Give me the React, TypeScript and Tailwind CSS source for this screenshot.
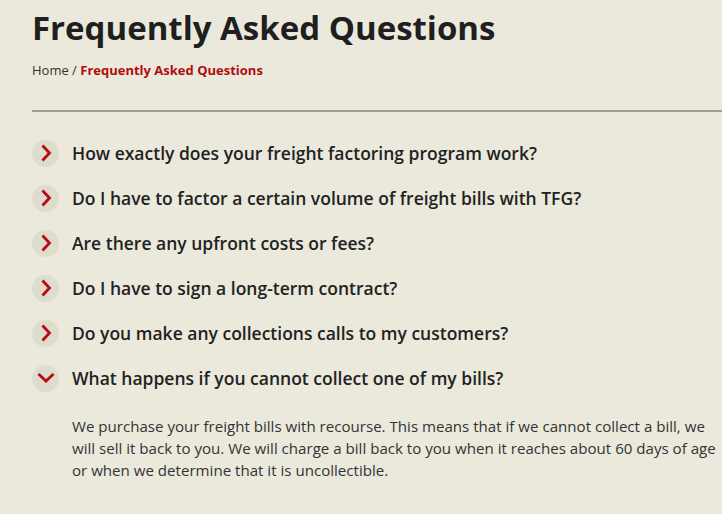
import React from 'react';

const questions = [
  'How exactly does your freight factoring program work?',
  'Do I have to factor a certain volume of freight bills with TFG?',
  'Are there any upfront costs or fees?',
  'Do I have to sign a long-term contract?',
  'Do you make any collections calls to my customers?',
  'What happens if you cannot collect one of my bills?',
];

const Chevron = ({ open }: { open: boolean }) => (
  <div className="w-[27px] h-[27px] rounded-full bg-[#dedbcf] flex items-center justify-center shrink-0">
    <svg width="20" height="20" viewBox="0 0 20 20" fill="none">
      {open ? (
        <path d="M2.5 6 L10 13 L17.5 6" stroke="#b50d12" strokeWidth="2.8" />
      ) : (
        <path d="M6.5 2.5 L13.5 10 L6.5 17.5" stroke="#b50d12" strokeWidth="2.8" />
      )}
    </svg>
  </div>
);

export default function App() {
  return (
    <div className="w-[722px] h-[514px] overflow-hidden bg-[#eae9dc] font-['Open_Sans',sans-serif] text-[#222]">
      <div className="pl-8">
        <h1 className="text-[33px] font-bold leading-none pt-[11px] text-[#1f1f1f]">Frequently Asked Questions</h1>
        <div className="mt-[17px] text-[13px] text-[#333]">
          Home / <span className="font-bold text-[#b00d0d]">Frequently Asked Questions</span>
        </div>
        <div className="mt-[29px] h-[2px] bg-[#9c9d8c]" />
        <div className="mt-[19px] flex flex-col">
          {questions.map((q, i) => {
            const open = i === questions.length - 1;
            return (
              <div key={q}>
                <div className="flex items-center gap-[13px] h-[45px]">
                  <Chevron open={open} />
                  <span className="text-[17.5px] font-semibold text-[#222]">{q}</span>
                </div>
                {open && (
                  <p className="mt-[14px] ml-[40px] text-[15.1px] leading-[22px] text-[#333]">
                    We purchase your freight bills with recourse. This means that if we cannot collect a bill, we will sell it back to you. We will charge a bill back to you when it reaches about 60 days of age or when we determine that it is uncollectible.
                  </p>
                )}
              </div>
            );
          })}
        </div>
      </div>
    </div>
  );
}
